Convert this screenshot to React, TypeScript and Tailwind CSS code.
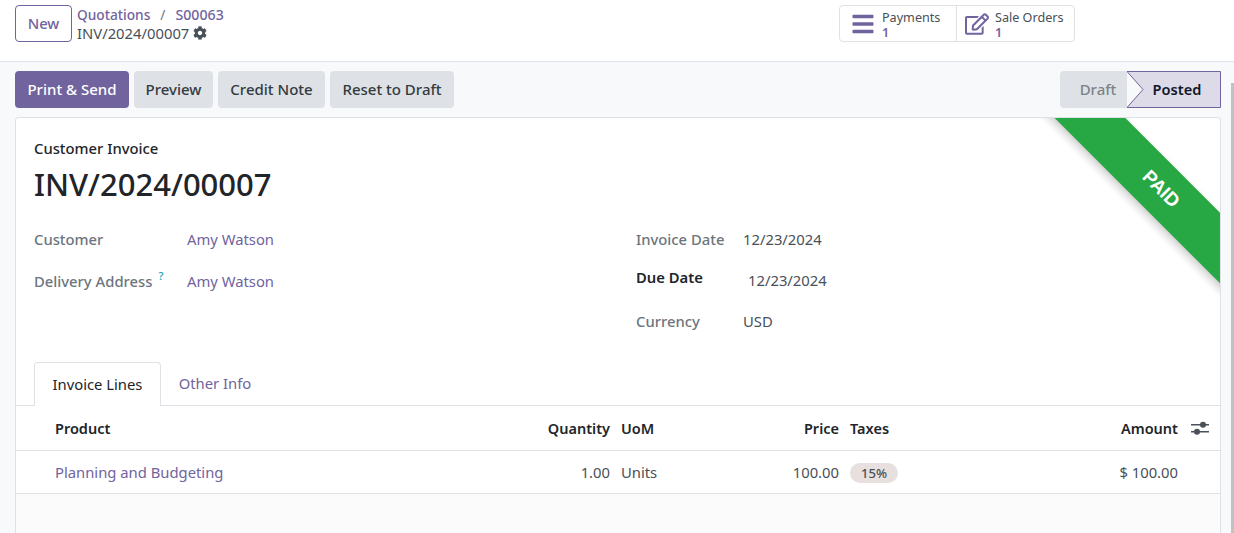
import { FaBars, FaCog, FaRegEdit } from "react-icons/fa";

const purple = "text-[#71639e]";

function Field({ label, value, bold, link, height = "h-[41px]", valueClass = "" }: { label: React.ReactNode; value: string; bold?: boolean; link?: boolean; height?: string; valueClass?: string }) {
  return (
    <div className={`flex items-center ${height}`}>
      <div className={`${bold ? "mt-[-6px] font-semibold text-[#212529]" : "font-medium text-[#6c757d]"} w-[107px] shrink-0`}>{label}</div>
      <div className={`${link ? purple : "text-[#495057]"} ${valueClass}`}>{value}</div>
    </div>
  );
}

function SmartButton({ icon, label, width, iconWidth }: { icon: React.ReactNode; label: string; width: string; iconWidth: string }) {
  return (
    <div className={`flex h-full items-center ${width}`}>
      <div className={`flex shrink-0 justify-center ${iconWidth}`}>{icon}</div>
      <div className="mt-[2px] flex flex-col text-[12.6px] leading-[15px]">
        <span className="text-[#495057]">{label}</span>
        <span className={`font-semibold ${purple}`}>1</span>
      </div>
    </div>
  );
}

export default function App() {
  return (
    <div className="relative flex h-[533px] w-[1234px] flex-col overflow-hidden bg-[#f8f9fa] text-[14.8px] font-['Noto_Sans',sans-serif] text-[#212529]">
      {/* Control panel */}
      <div className="flex h-[62px] shrink-0 border-b border-[#dee2e6] bg-white pl-[15px]">
        <button className={`mt-[5px] h-[37px] w-[57px] rounded-[4px] border border-[#71639e] font-medium ${purple}`}>New</button>
        <div className="ml-[5px] mt-[5px] w-[762px]">
          <div className={`text-[13.7px] font-medium leading-[19px] ${purple}`}>
            Quotations<span className="mx-[10px] font-normal text-[#6c757d]">/</span>
            <span className="text-[14.2px]">S00063</span>
          </div>
          <div className="flex items-center gap-[4px] leading-[18px] text-[#495057]">
            INV/2024/00007
            <FaCog size={14} className="text-[#495057]" />
          </div>
        </div>
        <div className="mt-[5px] flex h-[37px] w-[236px] rounded-[4px] border border-[#dee2e6] bg-white">
          <SmartButton
            width="w-[117px] border-r border-[#dee2e6]"
            iconWidth="w-[42px] pl-[4px]"
            label="Payments"
            icon={<FaBars size={24} className={purple} />}
          />
          <SmartButton
            width="flex-1"
            iconWidth="w-[38px] pl-[1px]"
            label="Sale Orders"
            icon={<FaRegEdit size={24} className={purple} />}
          />
        </div>
      </div>

      {/* Action buttons + statusbar */}
      <div className="flex h-[55px] shrink-0 items-start pl-[15px] pr-[13px] pt-[9px] text-[15px] font-medium">
        <div className="flex gap-[5px]">
          <button className="h-[37px] w-[114px] rounded-[4px] bg-[#71639e] text-white">Print &amp; Send</button>
          <button className="h-[37px] w-[79px] rounded-[4px] bg-[#dee2e6] text-[#343a40]">Preview</button>
          <button className="h-[37px] w-[107px] rounded-[4px] bg-[#dee2e6] text-[#343a40]">Credit Note</button>
          <button className="h-[37px] w-[124px] rounded-[4px] bg-[#dee2e6] text-[#343a40]">Reset to Draft</button>
        </div>
        <div className="ml-auto flex h-[37px] w-[161px]">
          <div className="flex w-[67px] items-center justify-center rounded-l-[4px] bg-[#dee2e6] pl-[9px] text-[#7c8289]">Draft</div>
          <div className="relative flex flex-1 items-center justify-center pl-[6px] text-[14.6px] font-semibold text-[#111827]">
            <svg className="absolute inset-0" width="94" height="37" viewBox="0 0 94 37" fill="none">
              <path d="M0 0.5H93.5V36.5H0L16 18.5Z" fill="#dedbe8" stroke="#71639e" />
            </svg>
            <span className="relative">Posted</span>
          </div>
        </div>
      </div>

      {/* Sheet */}
      <div className="relative ml-[15px] w-[1206px] flex-1 rounded-t-[4px] border border-b-0 border-[#dee2e6] bg-white">
        <div className="absolute right-0 top-0 h-[180px] w-[180px] overflow-hidden">
          <div className="absolute left-[-29px] top-[46px] flex h-[50px] w-[300px] rotate-45 items-center justify-center bg-[#28a745] text-[19px] font-semibold text-white shadow-[0_4px_8px_rgba(0,0,0,0.2)] font-['Liberation_Sans',sans-serif]">
            PAID
          </div>
        </div>

        <div className="px-[18px] pt-[20px]">
          <div className="font-medium leading-[20px]">Customer Invoice</div>
          <h1 className="mt-[5px] text-[31px] font-medium leading-[43px]">INV/2024/00007</h1>
          <div className="mt-[12px] flex">
            <div className="w-[602px]">
              <div className="[&>div>div:first-child]:w-[153px]">
                <Field label="Customer" value="Amy Watson" link height="h-[42px]" />
                <Field
                  label={
                    <span>
                      Delivery Address<sup className="top-[-7px] ml-[6px] text-[11px] text-[#17a2b8]">?</sup>
                    </span>
                  }
                  value="Amy Watson"
                  link
                  height="h-[42px]"
                />
              </div>
            </div>
            <div>
              <Field label="Invoice Date" value="12/23/2024" height="h-[42px]" />
              <Field label="Due Date" value="12/23/2024" bold valueClass="ml-[5px]" />
              <Field label="Currency" value="USD" />
            </div>
          </div>
        </div>

        {/* Tabs */}
        <div className="mt-[20px] flex h-[44px] border-b border-[#dee2e6] pl-[18px]">
          <div className="flex h-[44px] w-[127px] items-center justify-center rounded-t-[4px] border border-b-0 border-[#dee2e6] bg-white">Invoice Lines</div>
          <div className={`flex h-[43px] w-[108px] items-center justify-center ${purple}`}>Other Info</div>
        </div>

        {/* Lines */}
        <div className="flex h-[45px] items-center border-b border-[#dee2e6] pt-[1px] text-[14.5px] font-semibold text-[#212529]">
          <div className="w-[39px]" />
          <div className="w-[435px]">Product</div>
          <div className="w-[120px] text-right">Quantity</div>
          <div className="ml-[11px] w-[60px]">UoM</div>
          <div className="w-[158px] text-right">Price</div>
          <div className="ml-[11px] w-[100px]">Taxes</div>
          <div className="w-[228px] text-right">Amount</div>
          <svg className="ml-[13px]" width="18" height="15" viewBox="0 0 18 15" fill="#495057">
            <rect y="3" width="18" height="1.5" />
            <rect y="10" width="18" height="1.5" />
            <circle cx="12" cy="3.7" r="3" />
            <circle cx="6" cy="10.7" r="3" />
          </svg>
        </div>
        <div className="flex h-[43px] items-center border-b border-[#dee2e6] text-[#495057]">
          <div className="w-[39px]" />
          <div className={`w-[435px] ${purple}`}>Planning and Budgeting</div>
          <div className="w-[120px] text-right">1.00</div>
          <div className="ml-[11px] w-[60px]">Units</div>
          <div className="w-[158px] text-right">100.00</div>
          <div className="ml-[11px] w-[100px]">
            <span className="inline-flex h-[20px] w-[48px] items-center justify-center rounded-full bg-[#e7e0de] text-[13px] font-medium text-[#495057]">15%</span>
          </div>
          <div className="w-[228px] text-right">$ 100.00</div>
        </div>
        <div className="h-full bg-[#fbfbfb]" />
      </div>

      {/* Scrollbar */}
      <div className="absolute right-0 top-[83px] h-[450px] w-[3px] bg-[#c1c1c1]" />
    </div>
  );
}
